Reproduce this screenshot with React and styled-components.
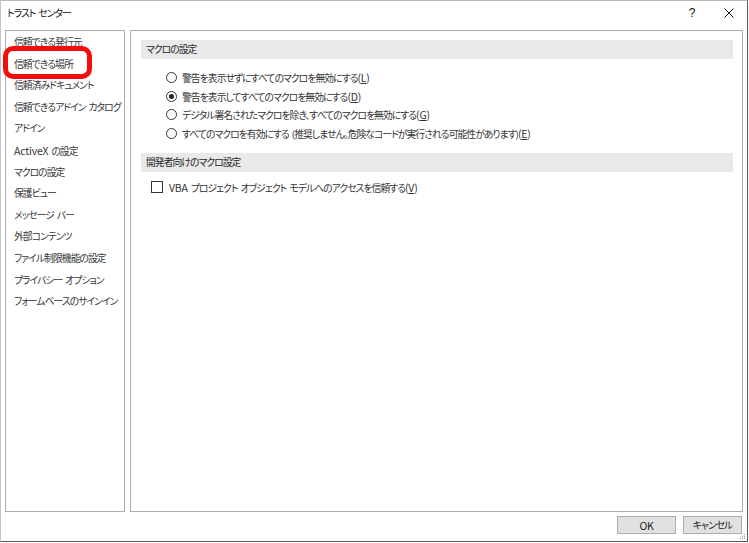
import React from "react";
import styled, { createGlobalStyle } from "styled-components";

const GlobalStyle = createGlobalStyle`
	html, body {
		margin: 0;
		padding: 0;
		background: #ffffff;
	}
	body {
		font-family: "Noto Sans CJK JP", "Noto Sans", sans-serif;
		font-feature-settings: "palt" 1;
		font-size: 9.8px;
		letter-spacing: -0.95px;
		color: #333333;
	}
`;

const Latin = styled.span`
	letter-spacing: -0.2px;
	font-size: 10.5px;
`;

const Gap = styled.span`
	display: inline-block;
	width: 3px;
`;

const navItems = [
	"信頼できる発行元",
	"信頼できる場所",
	"信頼済みドキュメント",
	<>
		信頼できるアドイン<Gap />カタログ
	</>,
	"アドイン",
	<>
		<Latin>ActiveX</Latin>
		<Gap />の設定
	</>,
	"マクロの設定",
	"保護ビュー",
	<>
		メッセージ<Gap />バー
	</>,
	"外部コンテンツ",
	"ファイル制限機能の設定",
	<>
		プライバシー<Gap />オプション
	</>,
	"フォームベースのサインイン",
];

const macroOptions = [
	{ text: "警告を表示せずにすべてのマクロを無効にする", key: "L" },
	{ text: "警告を表示してすべてのマクロを無効にする", key: "D", checked: true },
	{ text: "デジタル署名されたマクロを除き、すべてのマクロを無効にする", key: "G" },
	{
		text: (
			<>
				すべてのマクロを有効にする<Gap />(推奨しません。危険なコードが実行される可能性があります)
			</>
		),
		key: "E",
	},
];

function Radio({ checked }) {
	return (
		<svg width="11" height="11" viewBox="0 0 11 11">
			<circle cx="5.5" cy="5.5" r="5" fill="#fff" stroke="#333" strokeWidth="1" />
			{checked && <circle cx="5.5" cy="5.5" r="2.5" fill="#222" />}
		</svg>
	);
}

function AccessKey({ k }) {
	return (
		<Latin>
			(<u>{k}</u>)
		</Latin>
	);
}

function App() {
	return (
		<>
			<GlobalStyle />
			<Window>
				<TitleBar>
					<Title>
						トラスト<Gap />センター
					</Title>
					<TitleButtons>
						<HelpButton>?</HelpButton>
						<CloseButton>
							<svg width="10" height="10" viewBox="0 0 10 10">
								<path d="M0.5 0.5 L9.5 9.5 M9.5 0.5 L0.5 9.5" stroke="#111" strokeWidth="1" />
							</svg>
						</CloseButton>
					</TitleButtons>
				</TitleBar>

				<Body>
					<SidePanel>
						<NavList>
							{navItems.map((item, i) => (
								<NavItem key={i}>{item}</NavItem>
							))}
						</NavList>
						<Highlight />
					</SidePanel>

					<ContentPanel>
						<SectionHeader>マクロの設定</SectionHeader>
						<OptionList>
							{macroOptions.map((o) => (
								<OptionRow key={o.key}>
									<Radio checked={o.checked} />
									<span>
										{o.text}
										<AccessKey k={o.key} />
									</span>
								</OptionRow>
							))}
						</OptionList>

						<SectionHeader>開発者向けのマクロ設定</SectionHeader>
						<CheckRow>
							<CheckBox />
							<span>
								<Latin>VBA</Latin>
								<Gap />
								プロジェクト<Gap />オブジェクト<Gap />モデルへのアクセスを信頼する
								<AccessKey k="V" />
							</span>
						</CheckRow>
					</ContentPanel>
				</Body>

				<Footer>
					<Button>
						<Latin>OK</Latin>
					</Button>
					<Button>キャンセル</Button>
				</Footer>
				<Grip>
					<svg width="6" height="6" viewBox="0 0 6 6">
						<rect x="4" y="0" width="1" height="1" fill="#999" />
						<rect x="2" y="2" width="1" height="1" fill="#999" />
						<rect x="4" y="2" width="1" height="1" fill="#999" />
						<rect x="0" y="4" width="1" height="1" fill="#999" />
						<rect x="2" y="4" width="1" height="1" fill="#999" />
						<rect x="4" y="4" width="1" height="1" fill="#999" />
					</svg>
				</Grip>
			</Window>
		</>
	);
}

export default App;

const Window = styled.div`
	position: relative;
	width: 748px;
	height: 542px;
	box-sizing: border-box;
	border-top: 1px solid #b8b8b8;
	border-left: 1px solid #c4c4c4;
	border-right: 1px solid #5a5a5a;
	border-bottom: 1px solid #5a5a5a;
	background: #fff;
	display: flex;
	flex-direction: column;
`;

const TitleBar = styled.div`
	height: 23px;
	display: flex;
	align-items: center;
	justify-content: space-between;
	padding-left: 6px;
`;

const Title = styled.div`
	color: #111;
`;

const TitleButtons = styled.div`
	display: flex;
	align-items: center;
	height: 100%;
`;

const HelpButton = styled.div`
	width: 30px;
	text-align: center;
	font-family: "Liberation Sans", sans-serif;
	font-size: 12px;
	letter-spacing: 0;
	color: #111;
	margin-right: 4px;
`;

const CloseButton = styled.div`
	width: 36px;
	display: flex;
	justify-content: center;
	align-items: center;
`;

const Body = styled.div`
	flex: 1;
	display: flex;
	gap: 5px;
	padding: 6px 4px 0 4px;
`;

const SidePanel = styled.div`
	position: relative;
	width: 120px;
	border: 1px solid #adadad;
	box-sizing: border-box;
`;

const NavList = styled.div`
	padding-top: 1px;
`;

const NavItem = styled.div`
	height: 21.6px;
	line-height: 21.6px;
	padding-left: 8px;
	white-space: nowrap;
	color: #363636;
`;

const Highlight = styled.div`
	position: absolute;
	left: -3px;
	top: 15px;
	width: 79px;
	height: 23px;
	border: 5px solid #f40d0d;
	border-radius: 10px;
`;

const ContentPanel = styled.div`
	flex: 1;
	border: 1px solid #adadad;
	box-sizing: border-box;
	padding: 9px 9px 0 10px;
`;

const SectionHeader = styled.div`
	height: 19px;
	line-height: 19px;
	background: #e9e9e9;
	padding-left: 5px;
	color: #262626;
`;

const OptionList = styled.div`
	padding: 9px 0 10px 25px;
`;

const OptionRow = styled.div`
	height: 18.7px;
	display: flex;
	align-items: center;
	gap: 5px;
	white-space: nowrap;

	u {
		text-underline-offset: 1px;
	}
`;

const CheckRow = styled.div`
	display: flex;
	align-items: center;
	gap: 6px;
	padding: 8px 0 0 10px;
	white-space: nowrap;
`;

const CheckBox = styled.div`
	width: 10px;
	height: 10px;
	border: 1px solid #333;
	background: #fff;
`;

const Footer = styled.div`
	height: 29px;
	display: flex;
	justify-content: flex-end;
	align-items: flex-start;
	gap: 7px;
	padding: 4px 5px 0 0;
	box-sizing: border-box;
`;

const Button = styled.div`
	width: 59px;
	height: 18px;
	box-sizing: border-box;
	border: 1px solid #adadad;
	background: #e1e1e1;
	display: flex;
	align-items: center;
	justify-content: center;
	color: #1a1a1a;
`;

const Grip = styled.div`
	position: absolute;
	right: 1px;
	bottom: 1px;
	line-height: 0;
`;
